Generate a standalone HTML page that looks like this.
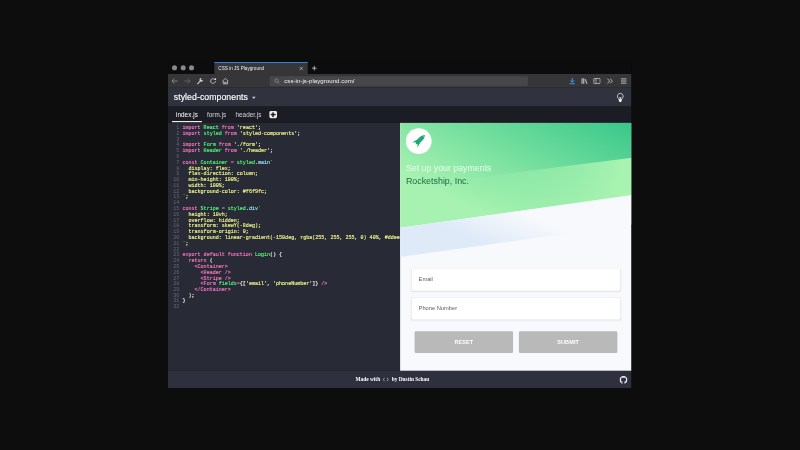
<!DOCTYPE html>
<html lang="en">
<head>
<meta charset="utf-8">
<title>CSS in JS Playground</title>
<style>
*{box-sizing:border-box;margin:0;padding:0}
html,body{width:800px;height:450px;overflow:hidden;background:#0d0d0d}
body{font-family:"Liberation Sans",sans-serif;position:relative}
#win{position:absolute;left:168.2px;top:62px;width:1280px;height:900px;transform:scale(.3621,.3625);transform-origin:0 0;overflow:hidden;background:#0c0c0d;filter:blur(1px)}
#win>div{position:absolute}
/* browser chrome */
.titlebar{left:0;top:0;width:1280px;height:33px;background:#0c0c0d}
.light{position:absolute;top:9px;width:14px;height:14px;border-radius:50%;background:#898989}
.btab{position:absolute;left:128px;top:0;width:258px;height:34px;background:#363638;border-top:3px solid #2d7fdc;color:#f0f0f0;font-size:12.8px;line-height:30px;padding-left:11px;white-space:nowrap}
.btab .x{position:absolute;right:11px;top:8px;width:14px;height:14px}
.newtab{position:absolute;left:396px;top:9px;width:16px;height:16px}
.navbar{left:0;top:33px;width:1280px;height:38px;background:#363638}
.navbar svg{position:absolute;top:8.5px;width:21px;height:21px}
.url{position:absolute;left:281px;top:5.5px;width:713px;height:28px;background:#474749;border-radius:3px;color:#f4f4f4;font-size:16.8px;letter-spacing:.12px;line-height:28px;padding-left:40px;white-space:nowrap}
.url svg{left:12px;top:6px;width:16px;height:16px}
/* app */
.apphead{left:0;top:71px;width:1280px;height:52px;background:#30323d}
.apphead h1{-webkit-text-stroke:.4px #fff;position:absolute;left:16px;top:0;line-height:54px;font-size:24px;font-weight:400;color:#fff;white-space:nowrap;letter-spacing:.2px}
.apphead .caret{position:absolute;left:231.5px;top:25px;width:0;height:0;border:5px solid transparent;border-top:6px solid #c9cad1}
.apphead svg{position:absolute;right:20.5px;top:13px;width:22px;height:28px}
.tabs{left:0;top:123px;width:1280px;height:45px;background:#1c1d24;white-space:nowrap;font-size:17.5px;color:#d6d7dd;padding-left:11px}
.tabs span{display:inline-block;height:43px;line-height:44px;padding:0 11px;margin-right:3px;vertical-align:top;letter-spacing:.15px}
.tabs span.on{color:#fff;border-bottom:3px solid #fff}
.tabs .plus{position:absolute;left:279.5px;top:12px;width:21px;height:20px;border-radius:4px;background:#ececec}
.tabs .plus:before,.tabs .plus:after{content:"";position:absolute;background:#15161b}
.tabs .plus:before{left:4px;top:8px;width:13px;height:4px}
.tabs .plus:after{left:8.5px;top:3.5px;width:4px;height:13px}
.editor{left:0;top:168px;width:641px;height:684px;background:#282a36;overflow:hidden;font-family:"Liberation Mono",monospace;font-size:13.9px;line-height:15.95px;color:#f8f8f2;padding-top:6.2px}
.editor pre{font:inherit;white-space:pre;counter-reset:l;-webkit-text-stroke:.35px}
.editor pre i{font-style:normal;display:block;height:15.95px;padding-left:40px;position:relative}
.editor pre i:before{counter-increment:l;content:counter(l);position:absolute;left:0;width:31px;text-align:right;color:#666978;-webkit-text-stroke:0}
.editor b{font-weight:400}
.k{color:#ff79c6}.g{color:#50fa7b}.s{color:#f1fa8c}.c{color:#8be9fd}
.footer{left:0;top:852px;width:1280px;height:48px;background:#2e303e;color:#fff;font-family:"Liberation Serif",serif;font-weight:700;font-size:14.8px;line-height:48px;text-align:center}
.footer p{position:absolute;left:518px;top:0;white-space:nowrap}
.footer svg.gh{position:absolute;right:11px;top:14px;width:22px;height:22px}
/* preview */
.preview{left:641px;top:168px;width:639px;height:684px;background:#f7f9fc;overflow:hidden}
.phead{position:absolute;left:0;top:0;width:640px;height:289px;background:linear-gradient(27deg,#a7f2b0 25%,#37c78a 101%);clip-path:polygon(0 0,100% 0,100% 200px,0 100%)}
.phead .ov{position:absolute;left:0;top:0;width:640px;height:289px;clip-path:polygon(0 178px,100% 96px,100% 100%,0 100%);background:linear-gradient(100deg,rgba(169,243,177,0) 30%,rgba(169,243,177,1) 92%)}
.phead .logo{position:absolute;left:16px;top:14.5px;width:71px;height:71px;border-radius:50%;background:#fff}
.phead .logo svg{position:absolute;left:0;top:0;width:71px;height:71px}
.phead .t1{position:absolute;left:16px;top:109px;font-size:24.3px;line-height:30px;color:#fff;white-space:nowrap;font-weight:400;opacity:.82}
.phead .t2{position:absolute;left:16px;top:145px;font-size:24.5px;line-height:30px;color:#1d6b47;white-space:nowrap}
.stripe{position:absolute;left:0;top:288.5px;width:640px;height:80.5px;transform:skewY(-8deg);transform-origin:0 0;background:linear-gradient(-150deg,#f7f9fc 40%,#deeaf8 70%)}
.inp{position:absolute;left:32px;width:576px;height:60px;background:#fff;border-radius:4px;box-shadow:0 2px 5px rgba(50,50,93,.07),0 1px 2px rgba(0,0,0,.04);color:#5c5c5c;font-size:15.8px;line-height:57px;padding-left:19px}
.btn{position:absolute;top:575px;width:272px;height:60px;background:#b9b9b9;border-radius:4px;color:#fff;font-weight:700;font-size:15.2px;line-height:57px;text-align:center;letter-spacing:.3px;text-transform:uppercase}
</style>
</head>
<body>
<div id="win">
  <div class="titlebar">
    <span class="light" style="left:11px"></span><span class="light" style="left:34.500px"></span><span class="light" style="left:58px"></span>
    <div class="btab"><span class="tt">CSS in JS Playground</span>
      <svg class="x" viewBox="0 0 14 14"><path d="M2.5 2.5l9 9M11.5 2.5l-9 9" stroke="#d8d8d8" stroke-width="1.6" fill="none"/></svg>
    </div>
    <svg class="newtab" viewBox="0 0 16 16"><path d="M8 1.5v13M1.5 8h13" stroke="#e0e0e0" stroke-width="2" fill="none"/></svg>
  </div>
  <div class="navbar">
    <svg style="left:8px" viewBox="0 0 18 18"><path d="M16 9H3M8.5 3L2.5 9l6 6" stroke="#9a9a9c" stroke-width="1.8" fill="none"/></svg>
    <svg style="left:43px" viewBox="0 0 18 18"><path d="M2 9h13M9.5 3l6 6-6 6" stroke="#6d6d70" stroke-width="1.8" fill="none"/></svg>
    <svg style="left:78px" viewBox="0 0 18 18"><path d="M3 15.5l7-7" stroke="#d5d5d7" stroke-width="2.4" fill="none" stroke-linecap="round"/><path d="M15.8 5.2a4.2 4.2 0 1 1-3-3l-2.3 2.5 2.8 2.8z" fill="#d5d5d7"/></svg>
    <svg style="left:113.5px" viewBox="0 0 18 18"><path d="M14.5 9a5.6 5.6 0 1 1-1.8-4.1" stroke="#d5d5d7" stroke-width="1.9" fill="none"/><path d="M10.5 6.5h5.5V1z" fill="#d5d5d7"/></svg>
    <svg style="left:148px" viewBox="0 0 18 18"><path d="M2 9.5L9 2.5l7 7M4 8.5V16h10V8.5M7.5 16v-4.5h3V16" stroke="#d5d5d7" stroke-width="1.7" fill="none" stroke-linejoin="round"/></svg>
    <div class="url"><svg viewBox="0 0 16 16"><circle cx="6.5" cy="6.5" r="4.6" stroke="#a9a9ab" stroke-width="1.6" fill="none"/><path d="M10 10l4.5 4.5" stroke="#a9a9ab" stroke-width="1.8"/></svg><span class="ut">css-in-js-playground.com/</span></div>
    <svg style="left:1105.5px" viewBox="0 0 18 18"><path d="M9 1.5v10M4.5 7.5L9 12l4.5-4.500M2.500 15.500h13" stroke="#3ea0ff" stroke-width="2.200" fill="none"/></svg>
    <svg style="left:1140px" viewBox="0 0 18 18"><path d="M3 2.500v13M7 2.500v13M10.500 4.500l4 11" stroke="#d5d5d7" stroke-width="2.300" fill="none"/></svg>
    <svg style="left:1174px" viewBox="0 0 18 18"><rect x="1.500" y="3" width="15" height="12" rx="1.500" stroke="#d5d5d7" stroke-width="1.700" fill="none"/><path d="M7 3v12" stroke="#d5d5d7" stroke-width="1.500"/><path d="M3.500 6h2M3.500 8.500h2" stroke="#d5d5d7" stroke-width="1"/></svg>
    <svg style="left:1210px" viewBox="0 0 18 18"><path d="M3 3.500L8.500 9 3 14.500M9.500 3.500L15 9l-5.500 5.500" stroke="#d5d5d7" stroke-width="1.900" fill="none"/></svg>
    <svg style="left:1247.5px" viewBox="0 0 18 18"><path d="M2.500 4h13M2.500 9h13M2.500 14h13" stroke="#d5d5d7" stroke-width="2" fill="none"/></svg>
  </div>
  <div class="apphead">
    <h1>styled-components</h1><span class="caret"></span>
    <svg viewBox="0 0 22 28"><path d="M11 2.500a8 8 0 0 0-5.200 14.100c.900.900 1.400 1.800 1.400 3h7.600c0-1.200.500-2.100 1.400-3A8 8 0 0 0 11 2.500z" stroke="#e4e4e8" stroke-width="2.200" fill="none"/><path d="M7.500 13.500l3.500 6 3.500-6z" fill="#e4e4e8"/><path d="M7 19h8v4.500l-2 3H9l-2-3z" fill="#f2f2f5"/></svg>
  </div>
  <div class="tabs"><span class="on">index.js</span><span>form.js</span><span>header.js</span><b class="plus"></b></div>
  <div class="editor"><pre><i><b class="k">import</b> <b class="g">React</b> <b class="k">from</b> <b class="s">'react'</b>;</i><i><b class="k">import</b> <b class="g">styled</b> <b class="k">from</b> <b class="s">'styled-components'</b>;</i><i></i><i><b class="k">import</b> <b class="g">Form</b> <b class="k">from</b> <b class="s">'./form'</b>;</i><i><b class="k">import</b> <b class="g">Header</b> <b class="k">from</b> <b class="s">'./header'</b>;</i><i></i><i><b class="k">const</b> <b class="g">Container</b> <b class="k">=</b> <b class="g">styled</b>.<b class="c">main</b><b class="s">`</b></i><i class="s">  display: flex;</i><i class="s">  flex-direction: column;</i><i class="s">  min-height: 100%;</i><i class="s">  width: 100%;</i><i class="s">  background-color: #f6f9fc;</i><i class="s">`;</i><i></i><i><b class="k">const</b> <b class="g">Stripe</b> <b class="k">=</b> <b class="g">styled</b>.<b class="c">div</b><b class="s">`</b></i><i class="s">  height: 10vh;</i><i class="s">  overflow: hidden;</i><i class="s">  transform: skewY(-8deg);</i><i class="s">  transform-origin: 0;</i><i><b class="s">  background: linear-gradient(-150deg, rgba(255, 255, 255, 0) 40%, #ddeefc 70%);</b></i><i class="s">`;</i><i></i><i><b class="k">export default function</b> <b class="g">Login</b>() {</i><i>  <b class="k">return</b> (</i><i>    <b class="k">&lt;Container&gt;</b></i><i>      <b class="k">&lt;Header /&gt;</b></i><i>      <b class="k">&lt;Stripe /&gt;</b></i><i>      <b class="k">&lt;Form</b> <b class="g">fields</b><b class="k">=</b>{[<b class="s">'email'</b>, <b class="s">'phoneNumber'</b>]} <b class="k">/&gt;</b></i><i>    <b class="k">&lt;/Container&gt;</b></i><i>  );</i><i>}</i><i></i></pre></div>
  <div class="preview">
    <div class="phead">
      <div class="ov"></div>
      <div class="logo"><svg viewBox="0 0 71 71"><path d="M52.5 18.1 C52.0 23.1 50.3 28.5 46.8 32.1 L40.4 38.4 L31.7 53.1 L32.2 42.9 L29.7 44.0 L26.6 40.9 L27.7 38.4 L17.5 38.9 L32.2 30.2 L38.5 23.8 C42.1 20.3 47.5 18.6 52.5 18.1Z" fill="#1ca877"/><path d="M45.8 19.1 L51.5 24.8" stroke="#fff" stroke-width="1" fill="none"/></svg></div>
      <div class="t1">Set up your payments</div>
      <div class="t2">Rocketship, Inc.</div>
    </div>
    <div class="stripe"></div>
    <div class="inp" style="top:403px">Email</div>
    <div class="inp" style="top:481.5px">Phone Number</div>
    <div class="btn" style="left:40px">Reset</div>
    <div class="btn" style="left:328px">Submit</div>
  </div>
  <div class="footer"><p>Made with<svg width="17" height="14" viewBox="0 0 17 14" style="vertical-align:-2px;margin:0 8px 0 7px"><path d="M5 2.500L1.500 7 5 11.500M12 2.500L15.500 7 12 11.500" stroke="#fff" stroke-width="1.500" fill="none"/></svg>by Dustin Schau</p>
    <svg class="gh" viewBox="0 0 16 16"><path fill="#e8e8ec" d="M8 0C3.580 0 0 3.580 0 8c0 3.540 2.290 6.530 5.470 7.590.400.070.550-.170.550-.380 0-.190-.010-.820-.010-1.490-2.010.370-2.530-.490-2.690-.940-.090-.230-.480-.940-.820-1.130-.280-.150-.680-.520-.010-.530.630-.010 1.080.580 1.230.820.720 1.210 1.870.870 2.330.660.070-.520.280-.870.510-1.070-1.780-.200-3.640-.890-3.640-3.950 0-.870.310-1.590.820-2.150-.080-.200-.360-1.020.080-2.120 0 0 .670-.210 2.200.820.640-.180 1.320-.270 2-.270s1.360.090 2 .270c1.530-1.040 2.200-.820 2.200-.820.440 1.100.160 1.920.080 2.120.510.560.820 1.270.820 2.150 0 3.070-1.870 3.750-3.650 3.950.290.250.540.730.540 1.480 0 1.070-.010 1.930-.010 2.200 0 .210.150.460.550.380A8.013 8.013 0 0 0 16 8c0-4.420-3.580-8-8-8z"/></svg>
  </div>
</div>
</body>
</html>
